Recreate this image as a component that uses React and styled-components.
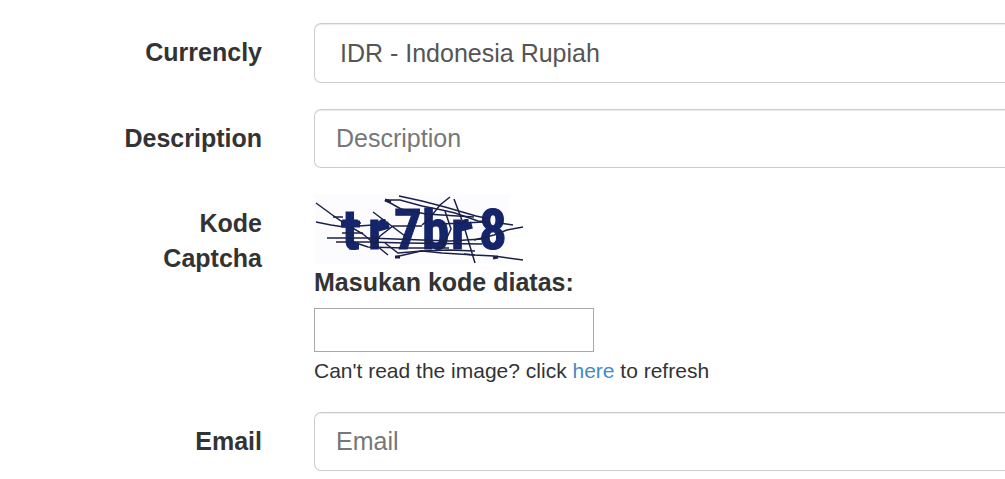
import React, { useState } from "react";
import styled, { createGlobalStyle } from "styled-components";

const GlobalStyle = createGlobalStyle`
  * {
    box-sizing: border-box;
  }
  body {
    margin: 0;
    background: #fff;
    color: #333;
    font-family: "Liberation Sans", Arial, sans-serif;
    font-size: 25px;
    line-height: 35px;
  }
`;

const Form = styled.form`
  display: flex;
  flex-direction: column;
  gap: 26px;
  padding-top: 23px;
  overflow: hidden;
`;

const Row = styled.div`
  display: grid;
  grid-template-columns: 152px minmax(0, 1fr);
  column-gap: 52px;
  padding-left: 110px;
`;

const Label = styled.label`
  padding-top: 12px;
  font-weight: bold;
  text-align: right;
`;

const fieldStyle = `
  display: block;
  width: 100%;
  border: 1px solid #ccc;
  border-right: 0;
  border-radius: 7px 0 0 7px;
  background: #fff;
  box-shadow: inset 0 2px 1px -1px rgba(0, 0, 0, 0.08);
  color: #555;
  font: inherit;
  outline: none;
`;

const Input = styled.input`
  ${fieldStyle}
  height: 59px;
  padding: 0 21px;
  &::placeholder {
    color: #777;
    opacity: 1;
  }
`;

const Select = styled.select`
  ${fieldStyle}
  height: 60px;
  padding: 0 25px;
  appearance: none;
`;

const Captcha = styled.div`
  display: flex;
  flex-direction: column;
  align-items: flex-start;
`;

const CaptchaImage = styled.svg`
  display: block;
  width: 210px;
  height: 71px;
`;

const CaptchaText = styled.text`
  fill: #14256b;
  stroke: #14256b;
  stroke-width: 1px;
  font-family: "Roboto Condensed", "Liberation Sans Narrow", sans-serif;
  font-size: 55px;
  font-weight: bold;
`;

const CaptchaLabel = styled.label`
  font-weight: bold;
`;

const CaptchaInput = styled.input`
  width: 280px;
  max-width: 100%;
  height: 44px;
  margin-top: 8px;
  padding: 0 8px;
  border: 1px solid #a9a9a9;
  font: inherit;
  outline: none;
`;

const Hint = styled.p`
  margin: 4px 0 0;
  font-size: 21px;
  line-height: 30px;
`;

const Link = styled.a`
  color: #428bca;
  text-decoration: none;
`;

const CaptchaCode = () => (
  <CaptchaImage viewBox="0 0 210 71" role="img" aria-label="Captcha">
    <rect width="196" height="70" fill="#fcfcfe" />
    <CaptchaText x="28 54 80 108 137 165" y="55">
      tr7br8
    </CaptchaText>
    <g fill="none" stroke="#1b2048" strokeWidth="1.5">
      <path d="M2 9L17 20L30 29L49 40L63 52L74 61" />
      <path d="M2 28L17 31L30 33L59 31" />
      <path d="M13 44H54L108 46L136 47L168 45" />
      <path d="M22 48H54L91 49L168 50M19 23H29M28 39H49M40 29H47" />
      <path d="M39 48L54 53L91 54H135" />
      <path d="M59 18L91 42M61 49L66 42L79 32H108" />
      <path d="M85 2L108 7L131 13L162 22L176 25" />
      <path d="M71 6L86 6L108 12L128 16L141 19L164 27L176 28" />
      <path d="M71 6L87 15L112 20L160 23" />
      <path d="M71 49L84 59L108 57L128 59L161 61" />
      <path d="M81 63L107 57L135 56L161 57" />
      <path d="M136 3L126 11L115 25L108 31M140 5L149 29L161 69" />
      <path d="M131 17L137 35L128 54M128 30L170 28M185 29L199 31" />
      <path d="M160 46L180 41L193 36L209 33" />
      <path d="M150 60L160 61L180 62L209 66" />
      <path d="M71 6L77 8M81 63L86 63M179 64L184 63" strokeWidth="3" />
    </g>
    {/* thick strokes that run into the letters */}
    <g fill="none" stroke="#14256b" strokeWidth="7">
      <path d="M27 30H46M35 52H45" />
      <path d="M64 34L75 31M146 34L158 31" />
    </g>
  </CaptchaImage>
);

const App = () => {
  const [code, setCode] = useState("");
  return (
    <>
      <GlobalStyle />
      <Form>
        <Row>
          <Label htmlFor="currency">Currencly</Label>
          <Select id="currency">
            <option>IDR - Indonesia Rupiah</option>
          </Select>
        </Row>
        <Row>
          <Label htmlFor="description">Description</Label>
          <Input id="description" placeholder="Description" />
        </Row>
        <Row>
          <Label htmlFor="captcha">Kode Captcha</Label>
          <Captcha>
            <CaptchaCode />
            <CaptchaLabel htmlFor="captcha">Masukan kode diatas:</CaptchaLabel>
            <CaptchaInput
              id="captcha"
              value={code}
              onChange={e => setCode(e.target.value)}
            />
            <Hint>
              Can't read the image? click <Link href="#">here</Link> to refresh
            </Hint>
          </Captcha>
        </Row>
        <Row>
          <Label htmlFor="email">Email</Label>
          <Input id="email" type="email" placeholder="Email" />
        </Row>
      </Form>
    </>
  );
};

export default App;
